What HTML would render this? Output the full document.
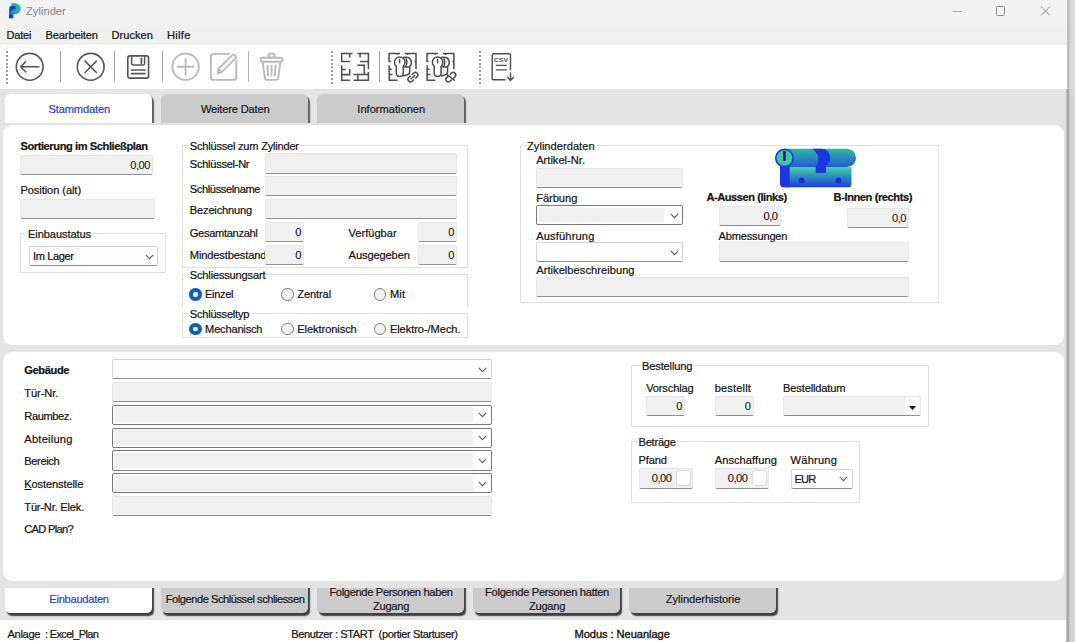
<!DOCTYPE html>
<html>
<head>
<meta charset="utf-8">
<title>Zylinder</title>
<style>
html,body{margin:0;padding:0;}
body{width:1075px;height:642px;overflow:hidden;position:relative;background:#e4e4e4;font-family:"Liberation Sans",sans-serif;font-size:11.1px;color:#141414;-webkit-text-stroke-width:0.22px;}
.a{position:absolute;white-space:nowrap;box-sizing:border-box;}
.t{position:absolute;white-space:nowrap;line-height:14px;height:14px;}
.b{font-weight:bold;letter-spacing:-0.36px;}
/* readonly text input */
.in{position:absolute;box-sizing:border-box;background:#f0f0f0;border:1px solid #e6e6e6;border-bottom:1px solid #909090;border-radius:2px;text-align:right;line-height:17px;padding-right:2px;letter-spacing:-0.45px;-webkit-text-stroke-width:0.1px;}
/* dark combo */
.cbd{position:absolute;box-sizing:border-box;background:#fff;border:1px solid #787878;border-radius:2px;}
.cbd i{position:absolute;left:1.6px;top:1.6px;bottom:1.6px;right:18px;background:#f0f0f0;}
/* light combo */
.cbl{position:absolute;box-sizing:border-box;background:#fdfdfd;border:1px solid #d2d2d2;border-bottom:1px solid #8e8e8e;border-radius:2px;line-height:17px;}
.chev{position:absolute;width:9px;height:6px;}
/* group box */
.gb{position:absolute;box-sizing:border-box;border:1px solid #dfdfdf;}
.gl{position:absolute;background:#fff;line-height:13px;height:13px;padding:0 1px;white-space:nowrap;}
/* radio */
.r0{position:absolute;box-sizing:border-box;width:12.4px;height:12.4px;border-radius:50%;border:1px solid #7e7e7e;background:#f1f1f1;}
.r1{position:absolute;box-sizing:border-box;width:12.4px;height:12.4px;border-radius:50%;border:4px solid #0a62b8;background:#fff;}
/* tabs */
.tab{position:absolute;box-sizing:border-box;text-align:center;color:#1a1a1a;}
.panel{position:absolute;background:#fff;border-radius:9px;}
.sep{position:absolute;width:1px;background:#a0a0a0;top:51px;height:31px;}
.grip{position:absolute;width:2px;top:50.5px;height:34px;background:repeating-linear-gradient(to bottom,#9c9c9c 0,#9c9c9c 2px,transparent 2px,transparent 3.85px);}
</style>
</head>
<body>
<!-- TITLE BAR -->
<div class="a" id="titlebar" style="left:0;top:0;width:1067px;height:24px;background:#f3f3f3;"></div>
<div class="a" id="menubar" style="left:0;top:23px;width:1067px;height:22px;background:linear-gradient(#f3f3f3,#f0f0f0 3px);"></div>
<div class="a" id="toolbar" style="left:0;top:44.8px;width:1067px;height:44.6px;background:#fff;"></div>
<div class="a" id="statusbar" style="left:0;top:620.4px;width:1067px;height:22px;background:#fff;"></div>
<!-- right window edge -->
<div class="a" style="left:1067px;top:0;width:8px;height:89px;background:linear-gradient(to right,#c4c4c4 0,#bcbcbc 1.5px,#d6d6d6 3px,#dedede 8px);"></div>
<div class="a" style="left:1065.5px;top:89px;width:9.5px;height:553px;background:linear-gradient(to right,#c6c6c6 0,#a8a8a8 1.5px,#b2b2b2 3px,#d2d2d2 4.2px,#dcdcdc 9.5px);"></div>

<!--TITLE-->
<svg class="a" style="left:8px;top:2px" width="14" height="17" viewBox="0 0 14 17">
<defs><linearGradient id="pg" x1="1" y1="0" x2="0" y2="1"><stop offset="0" stop-color="#2fc0a0"/><stop offset="0.55" stop-color="#22a0c0"/><stop offset="1" stop-color="#1a40e0"/></linearGradient></defs>
<path d="M3.2 1.2 H7.2 A5 5 0 0 1 7.2 12.2 H5.6 V16.2 H1 V9.5 L3.2 7.6 Z" fill="url(#pg)"/>
<path d="M1.6 4.2 H7.4 V7.6 H3.6 V9 L1 9.8 Z" fill="#1634e0"/>
<path d="M1 12.5 L3.6 12.5 L5 16.2 H1 Z" fill="#1438e8"/>
</svg>
<div class="t" style="left:26px;top:4px;font-size:11.1px;color:#838383;-webkit-text-stroke-width:0" ><span class="f" style="letter-spacing:0.041px;">Zylinder</span></div>
<svg class="a" style="left:940px;top:0" width="127" height="22" viewBox="0 0 127 22">
<path d="M12.5 11.5 H22" stroke="#b0b0b0" stroke-width="1" fill="none"/>
<rect x="56.5" y="6.5" width="8" height="9" rx="1" stroke="#8a8a8a" stroke-width="1" fill="none"/>
<path d="M101 6.5 L110 15.5 M110 6.5 L101 15.5" stroke="#8a8a8a" stroke-width="1" fill="none"/>
</svg>
<!--MENU-->
<div class="t" style="left:6.5px;top:28.2px"><span class="f" style="letter-spacing:-0.221px;">Datei</span></div>
<div class="t" style="left:45.6px;top:28.2px"><span class="f" style="letter-spacing:-0.157px;">Bearbeiten</span></div>
<div class="t" style="left:111.6px;top:28.2px"><span class="f" style="letter-spacing:-0.002px;">Drucken</span></div>
<div class="t" style="left:167px;top:28.2px"><span class="f" style="letter-spacing:0.299px;">Hilfe</span></div>
<!--TOOLBAR-->
<div class="grip" style="left:6px"></div>
<div class="grip" style="left:331px"></div>
<div class="grip" style="left:479px"></div>
<div class="sep" style="left:59.9px"></div>
<div class="sep" style="left:114.3px"></div>
<div class="sep" style="left:162px"></div>
<div class="sep" style="left:247.6px;background:#b4b4b4"></div>
<div class="sep" style="left:378.8px"></div>
<svg class="a" style="left:0;top:45px" width="540" height="44" viewBox="0 45 540 44" fill="none" stroke-linecap="round" stroke-linejoin="round">
<!-- back -->
<g stroke="#555" stroke-width="1.6">
<circle cx="29.7" cy="66.8" r="13.4"/>
<path d="M38.8 66.8 H20.6 M25.6 61.8 L20.6 66.8 L25.6 71.8"/>
<!-- cancel -->
<circle cx="90.7" cy="66.8" r="13.4"/>
<path d="M85 61.1 L96.4 72.5 M96.4 61.1 L85 72.5"/>
<!-- save -->
<rect x="127.8" y="55.9" width="20.8" height="22.2" rx="2.2" stroke-width="1.6"/>
<path d="M131.6 56 V63.6 Q131.6 65 133 65 H143.2 Q144.6 65 144.6 63.6 V56" stroke-width="1.5"/>
<path d="M141.4 58.4 V63" stroke-width="1.8"/>
<path d="M131.4 70 H145 M131.4 73.6 H145" stroke-width="1.6"/>
</g>
<!-- plus (disabled) -->
<g stroke="#b9b9b9" stroke-width="1.85">
<circle cx="185.6" cy="66.7" r="13.2"/>
<path d="M177.6 66.7 H193.6 M185.6 58.7 V74.7"/>
<!-- edit -->
<path d="M229.2 53.9 H213.6 Q210.9 53.9 210.9 56.6 V77.2 Q210.9 79.9 213.6 79.9 H233.6 Q236.3 79.9 236.3 77.2 V60.8"/>
<path d="M217.7 73.3 L218.2 69.2 L232 55.4 Q233.6 53.8 235.2 55.4 Q236.8 57 235.2 58.6 L221.4 72.4 Z M218.6 68.9 L221.8 72.1"/>
<!-- trash -->
<rect x="268.5" y="53.7" width="6" height="4" rx="1.3"/>
<rect x="260.6" y="57.7" width="21.8" height="4" rx="1.5"/>
<path d="M262.6 61.8 L265 78.6 Q265.2 79.9 266.5 79.9 H276.6 Q277.9 79.9 278.1 78.6 L280.5 61.8"/>
<path d="M267.4 65.6 L268.2 75.6 M271.5 65.6 V75.6 M275.6 65.6 L274.8 75.6"/>
</g>
<!-- floor plan -->
<g stroke="#505050" stroke-width="1.55" stroke-linecap="butt" stroke-linejoin="miter">
<path d="M352.6 53.5 H341.7 V61.4 H349.9 M349.7 53.5 V57.5"/>
<path d="M357.3 53.5 H368.4 V69.3 M360.1 53.5 V57.5 M360 61.4 H368.4"/>
<path d="M357.3 65.3 H364.3 V74.3 M353.5 74.4 H368.4 M368.4 72 V80.2 H353.5 M357.9 74.4 V80.2"/>
<path d="M341.7 65.2 V80.2 H349.9 M341.7 69.4 H345.8 M349.7 69 V74.6 H341.7"/>
</g>
<!-- plan + cylinder (x2) -->
<g stroke="#4c4c4c" stroke-width="1.5" stroke-linecap="butt">
<path d="M400 53.5 H389.1 V61.5 H390.8 M397.3 53.5 V54.8"/>
<path d="M404.8 53.5 H416 V69.3 M407.7 53.5 V55 M414.5 61.5 H416"/>
<path d="M389.2 65.2 V80.2 H397.6 M389.2 69.3 H391.7 M389.2 74.5 H392.6"/>
<!-- back cylinder -->
<path d="M402 57.6 Q404 57 406.6 57.3 A5.1 5.1 0 0 1 409.7 66.2 V71.8 Q409.7 74.8 406.7 75 L403 76"/>
<path d="M403.4 66.9 H409.6 M405.8 58.4 Q408 62 405.9 66.5"/>
<!-- front cylinder -->
<path d="M396.3 66.2 A5.3 5.3 0 1 1 403.2 66.2 V73 Q403.2 76.4 399.75 76.4 Q396.3 76.4 396.3 73 Z" fill="#fff"/>
<path d="M399.6 58.8 V63.4"/>
</g>
<g transform="translate(37.9 0)" stroke="#4c4c4c" stroke-width="1.5" stroke-linecap="butt">
<path d="M400 53.5 H389.1 V61.5 H390.8 M397.3 53.5 V54.8"/>
<path d="M404.8 53.5 H416 V69.3 M407.7 53.5 V55 M414.5 61.5 H416"/>
<path d="M389.2 65.2 V80.2 H397.6 M389.2 69.3 H391.7 M389.2 74.5 H392.6"/>
<!-- back cylinder -->
<path d="M402 57.6 Q404 57 406.6 57.3 A5.1 5.1 0 0 1 409.7 66.2 V71.8 Q409.7 74.8 406.7 75 L403 76"/>
<path d="M403.4 66.9 H409.6 M405.8 58.4 Q408 62 405.9 66.5"/>
<!-- front cylinder -->
<path d="M396.3 66.2 A5.3 5.3 0 1 1 403.2 66.2 V73 Q403.2 76.4 399.75 76.4 Q396.3 76.4 396.3 73 Z" fill="#fff"/>
<path d="M399.6 58.8 V63.4"/>
</g>
<!-- link -->
<g stroke="#4c4c4c" stroke-width="1.45" transform="translate(412.9 77.2) rotate(-42)">
<path d="M-1.2 -2.5 H-3.3 A2.5 2.5 0 0 0 -3.3 2.5 H-1.2 M1.2 -2.5 H3.3 A2.5 2.5 0 0 1 3.3 2.5 H1.2 M-2.4 0 H2.4"/>
</g>
<!-- broken link -->
<g stroke="#4c4c4c" stroke-width="1.45" transform="translate(450.8 77.2) rotate(-42)">
<path d="M-1.6 -2.5 H-3.3 A2.5 2.5 0 0 0 -3.3 2.5 H-1.6 M1.6 -2.5 H3.3 A2.5 2.5 0 0 1 3.3 2.5 H1.6"/>
</g>
<path d="M447.4 74.8 L454.2 80.2" stroke="#4c4c4c" stroke-width="1.5"/>
<!-- csv -->
<g stroke="#505050" stroke-width="1.45" stroke-linecap="butt">
<path d="M510.5 70.2 V54.9 Q510.5 53.8 509.4 53.8 H493.3 Q492.2 53.8 492.2 54.9 V78.7 Q492.2 79.8 493.3 79.8 H505.5"/>
<path d="M495.8 65.3 H506.9 M495.8 69.8 H506.9" stroke-width="1.3"/>
<path d="M510.5 73 V80.4 M507.5 77.3 L510.5 80.5 L513.5 77.3" stroke-linecap="round"/>
</g>
<text x="494" y="62.2" font-family="Liberation Sans" font-weight="bold" font-size="5.4" fill="#505050" stroke="none" textLength="14" lengthAdjust="spacingAndGlyphs">CSV</text>
</svg>
<!--TABS-->
<div class="a" style="left:5px;top:90px;width:152px;height:33px;overflow:hidden"><div class="tab" style="left:0;top:3.5px;width:146.5px;height:40px;background:#fff;border-radius:6px 6px 0 0;box-shadow:2px 2.5px 1.2px #5c5c5c;color:#2d3fd0;line-height:30.6px;padding-left:2px"><span class="f" style="letter-spacing:-0.121px;">Stammdaten</span></div></div>
<div class="a" style="left:161px;top:90px;width:152px;height:33px;overflow:hidden"><div class="tab" style="left:0;top:3.5px;width:146.5px;height:40px;background:#cbcbcb;border-radius:6px 6px 0 0;box-shadow:2px 2.5px 1.2px #5c5c5c;color:#1a1a1a;line-height:30.6px;padding-left:2px"><span class="f" style="letter-spacing:-0.163px;">Weitere Daten</span></div></div>
<div class="a" style="left:317px;top:90px;width:152px;height:33px;overflow:hidden"><div class="tab" style="left:0;top:3.5px;width:146.5px;height:40px;background:#cbcbcb;border-radius:6px 6px 0 0;box-shadow:2px 2.5px 1.2px #5c5c5c;color:#1a1a1a;line-height:30.6px;padding-left:2px"><span class="f" style="letter-spacing:-0.003px;">Informationen</span></div></div>
<!--PANEL1-->
<div class="panel" style="left:3px;top:125px;width:1061px;height:220px"></div>
<div class="t b" style="left:20.4px;top:138.7px;"><span class="f" style="letter-spacing:-0.411px;">Sortierung im Schließplan</span></div>
<div class="in" style="left:20px;top:155px;width:133px;height:20px;line-height:18.5px">0,00</div>
<div class="t" style="left:20.4px;top:182.7px;"><span class="f" style="letter-spacing:-0.075px;">Position (alt)</span></div>
<div class="in" style="left:20px;top:199px;width:135px;height:20px;line-height:18.5px"></div>
<div class="gb" style="left:20px;top:233px;width:146px;height:40.2px;"></div><div class="gl" style="left:27px;top:227.5px"><span class="f" style="letter-spacing:-0.096px;">Einbaustatus</span></div>
<div class="cbl" style="left:29px;top:246px;width:129px;height:20px;line-height:18px;padding-left:3px"><span class="f" style="letter-spacing:-0.398px;">Im Lager</span><svg class="chev" style="right:3.3px;top:6.5px" viewBox="0 0 9 6"><path d="M0.8 0.9 L4.5 4.6 L8.2 0.9" fill="none" stroke="#5e5e5e" stroke-width="1.15"/></svg></div>
<div class="gb" style="left:182px;top:144.6px;width:286px;height:123.8px;"></div><div class="gl" style="left:188.8px;top:140.0px"><span class="f" style="letter-spacing:-0.230px;">Schlüssel zum Zylinder</span></div>
<div class="t" style="left:189.8px;top:157.0px;"><span class="f" style="letter-spacing:-0.283px;">Schlüssel-Nr</span></div>
<div class="in" style="left:265px;top:153.1px;width:192px;height:20.6px;line-height:19.1px"></div>
<div class="t" style="left:189.8px;top:181.8px;"><span class="f" style="letter-spacing:-0.380px;">Schlüsselname</span></div>
<div class="in" style="left:265px;top:175.6px;width:192px;height:20.6px;line-height:19.1px"></div>
<div class="t" style="left:189.8px;top:202.8px;"><span class="f" style="letter-spacing:-0.178px;">Bezeichnung</span></div>
<div class="in" style="left:265px;top:198.7px;width:192px;height:20.3px;line-height:18.8px"></div>
<div class="t" style="left:189.8px;top:226.0px;"><span class="f" style="letter-spacing:-0.319px;">Gesamtanzahl</span></div>
<div class="in" style="left:265px;top:222.3px;width:39px;height:19.7px;line-height:18.2px">0</div>
<div class="t" style="left:348.6px;top:226.0px;"><span class="f" style="letter-spacing:-0.012px;">Verfügbar</span></div>
<div class="in" style="left:418px;top:222.3px;width:39px;height:19.7px;line-height:18.2px">0</div>
<div class="a" style="left:189.8px;top:247.8px;width:75.2px;height:14px;overflow:hidden"><div class="t" style="left:0;top:0"><span class="f" style="letter-spacing:-0.131px;">Mindestbestand</span></div></div>
<div class="in" style="left:265px;top:245.3px;width:39px;height:19.7px;line-height:18.2px">0</div>
<div class="t" style="left:348.6px;top:247.8px;"><span class="f" style="letter-spacing:-0.111px;">Ausgegeben</span></div>
<div class="in" style="left:418px;top:245.3px;width:39px;height:19.7px;line-height:18.2px">0</div>
<div class="gb" style="left:182px;top:274px;width:286px;height:34px;border-bottom:none;"></div><div class="gl" style="left:188.8px;top:268.5px"><span class="f" style="letter-spacing:-0.188px;">Schliessungsart</span></div>
<div class="r1" style="left:189.3px;top:288.2px"></div>
<div class="t" style="left:205.1px;top:287.1px;"><span class="f" style="letter-spacing:-0.370px;">Einzel</span></div>
<div class="r0" style="left:281.40000000000003px;top:288.2px"></div>
<div class="t" style="left:297.3px;top:287.1px;"><span class="f" style="letter-spacing:-0.119px;">Zentral</span></div>
<div class="r0" style="left:373.8px;top:288.2px"></div>
<div class="t" style="left:389.9px;top:287.1px;"><span class="f" style="letter-spacing:0.168px;">Mit</span></div>
<div class="gb" style="left:182px;top:313.3px;width:286px;height:25px;"></div><div class="gl" style="left:188.8px;top:307.8px"><span class="f" style="letter-spacing:-0.248px;">Schlüsseltyp</span></div>
<div class="r1" style="left:189.3px;top:322.5px"></div>
<div class="t" style="left:205.1px;top:321.8px;"><span class="f" style="letter-spacing:-0.200px;">Mechanisch</span></div>
<div class="r0" style="left:281.40000000000003px;top:322.5px"></div>
<div class="t" style="left:297.3px;top:321.8px;"><span class="f" style="letter-spacing:-0.086px;">Elektronisch</span></div>
<div class="r0" style="left:373.8px;top:322.5px"></div>
<div class="t" style="left:389.9px;top:321.8px;"><span class="f" style="letter-spacing:-0.065px;">Elektro-/Mech.</span></div>
<div class="gb" style="left:520px;top:144.7px;width:419px;height:158.3px;"></div><div class="gl" style="left:526px;top:140.0px"><span class="f" style="letter-spacing:0.029px;">Zylinderdaten</span></div>
<div class="t" style="left:536.2px;top:152.9px;"><span class="f" style="letter-spacing:0.009px;">Artikel-Nr.</span></div>
<div class="in" style="left:536px;top:168px;width:147px;height:20px;line-height:18.5px"></div>
<div class="t" style="left:536.2px;top:191.2px;"><span class="f" style="letter-spacing:-0.033px;">Färbung</span></div>
<div class="cbd" style="left:536px;top:205px;width:147px;height:20px"><i></i><svg class="chev" style="right:3.3px;top:6.5px" viewBox="0 0 9 6"><path d="M0.8 0.9 L4.5 4.6 L8.2 0.9" fill="none" stroke="#5e5e5e" stroke-width="1.15"/></svg></div>
<div class="t" style="left:536.2px;top:228.6px;"><span class="f" style="letter-spacing:0.155px;">Ausführung</span></div>
<div class="cbl" style="left:536px;top:242px;width:147px;height:20px;line-height:18px;padding-left:3px"><svg class="chev" style="right:3.3px;top:6.5px" viewBox="0 0 9 6"><path d="M0.8 0.9 L4.5 4.6 L8.2 0.9" fill="none" stroke="#5e5e5e" stroke-width="1.15"/></svg></div>
<div class="t" style="left:536.2px;top:262.7px;"><span class="f" style="letter-spacing:0.051px;">Artikelbeschreibung</span></div>
<div class="in" style="left:536px;top:277px;width:373px;height:20px;line-height:18.5px"></div>
<div class="t b" style="left:706.4px;top:190.4px;"><span class="f" style="letter-spacing:-0.446px;">A-Aussen (links)</span></div>
<div class="t b" style="left:833.6px;top:190.4px;"><span class="f" style="letter-spacing:-0.416px;">B-Innen (rechts)</span></div>
<div class="in" style="left:718.5px;top:206px;width:62px;height:20px;line-height:18.5px">0,0</div>
<div class="in" style="left:847px;top:208px;width:62px;height:20px;line-height:18.5px">0,0</div>
<div class="t" style="left:718.6px;top:228.5px;"><span class="f" style="letter-spacing:-0.203px;">Abmessungen</span></div>
<div class="in" style="left:718.5px;top:242px;width:190.5px;height:20px;line-height:18.5px"></div>
<!--CYL-->
<svg class="a" style="left:770px;top:145px" width="92" height="46" viewBox="770 145 92 46">
<defs>
<linearGradient id="c1" x1="0" y1="0" x2="0" y2="1"><stop offset="0" stop-color="#2fb8a0"/><stop offset="1" stop-color="#2858d8"/></linearGradient>
<linearGradient id="c2" x1="0" y1="0" x2="0" y2="1"><stop offset="0" stop-color="#42d4a0"/><stop offset="0.45" stop-color="#2e90c0"/><stop offset="1" stop-color="#1c3cdc"/></linearGradient>
</defs>
<path d="M784 148.8 H847 A9.1 9.1 0 0 1 847 167 H784 Z" fill="url(#c1)"/>
<path d="M780 167 H851.5 V184 Q851.5 187.3 848.3 187.3 H784 Q780 187.3 780 183.3 Z" fill="url(#c2)"/>
<path d="M780 163 H789.7 V187.3 H784 Q780 187.3 780 183.3 Z" fill="#1838e0"/>
<path d="M812.5 148.8 H821 A9.1 9.1 0 0 1 826 165.6 V173 H815.7 V167 Q822.5 158 812.5 148.8 Z" fill="#1a38e0"/>
<circle cx="784.5" cy="158" r="8.7" fill="#3cc8a0" stroke="#1a3ce0" stroke-width="1.7"/>
<path d="M784.2 151.2 V161 M784.2 153 H785.8 M784.2 156 H785.8 M784.2 159 H785.8" stroke="#0c1a78" stroke-width="2.4"/>
<circle cx="801.7" cy="180.5" r="3" fill="#1530cc"/>
<circle cx="838.5" cy="180.5" r="3" fill="#1530cc"/>
</svg>
<!--PANEL2-->
<div class="panel" style="left:3px;top:352px;width:1061px;height:229px"></div>
<div class="t b" style="left:24.3px;top:363.0px;"><span class="f" style="letter-spacing:-0.381px;">Gebäude</span></div>
<div class="t" style="left:24.3px;top:386.0px;"><span class="f" style="letter-spacing:-0.088px;">Tür-Nr.</span></div>
<div class="t" style="left:24.3px;top:408.8px;"><span class="f" style="letter-spacing:-0.408px;">Raumbez.</span></div>
<div class="t" style="left:24.3px;top:431.5px;"><span class="f" style="letter-spacing:0.226px;">Abteilung</span></div>
<div class="t" style="left:24.3px;top:454.3px;"><span class="f" style="letter-spacing:-0.389px;">Bereich</span></div>
<div class="t" style="left:24.3px;top:477.0px;"><span class="f" style="letter-spacing:-0.129px;"><u>K</u>ostenstelle</span></div>
<div class="t" style="left:24.3px;top:500.0px;"><span class="f" style="letter-spacing:-0.190px;">Tür-Nr. Elek.</span></div>
<div class="t" style="left:24.3px;top:522.1px;"><span class="f" style="letter-spacing:-0.699px;">CAD Plan?</span></div>
<div class="cbl" style="left:111.5px;top:359px;width:380px;height:20px;line-height:18px;padding-left:3px"><svg class="chev" style="right:3.3px;top:6.5px" viewBox="0 0 9 6"><path d="M0.8 0.9 L4.5 4.6 L8.2 0.9" fill="none" stroke="#5e5e5e" stroke-width="1.15"/></svg></div>
<div class="in" style="left:111.5px;top:382.3px;width:380px;height:19.5px;line-height:18.0px"></div>
<div class="cbd" style="left:111.5px;top:404.7px;width:380px;height:20.4px"><i></i><svg class="chev" style="right:3.3px;top:6.699999999999999px" viewBox="0 0 9 6"><path d="M0.8 0.9 L4.5 4.6 L8.2 0.9" fill="none" stroke="#5e5e5e" stroke-width="1.15"/></svg></div>
<div class="cbd" style="left:111.5px;top:427.5px;width:380px;height:20.4px"><i></i><svg class="chev" style="right:3.3px;top:6.699999999999999px" viewBox="0 0 9 6"><path d="M0.8 0.9 L4.5 4.6 L8.2 0.9" fill="none" stroke="#5e5e5e" stroke-width="1.15"/></svg></div>
<div class="cbd" style="left:111.5px;top:450.3px;width:380px;height:20.4px"><i></i><svg class="chev" style="right:3.3px;top:6.699999999999999px" viewBox="0 0 9 6"><path d="M0.8 0.9 L4.5 4.6 L8.2 0.9" fill="none" stroke="#5e5e5e" stroke-width="1.15"/></svg></div>
<div class="cbd" style="left:111.5px;top:473.1px;width:380px;height:20.4px"><i></i><svg class="chev" style="right:3.3px;top:6.699999999999999px" viewBox="0 0 9 6"><path d="M0.8 0.9 L4.5 4.6 L8.2 0.9" fill="none" stroke="#5e5e5e" stroke-width="1.15"/></svg></div>
<div class="in" style="left:111.5px;top:496.2px;width:380px;height:19.8px;line-height:18.3px"></div>
<div class="gb" style="left:631px;top:364.7px;width:298px;height:62.8px;"></div><div class="gl" style="left:641px;top:360.0px"><span class="f" style="letter-spacing:-0.151px;">Bestellung</span></div>
<div class="t" style="left:646.2px;top:381.0px;"><span class="f" style="letter-spacing:-0.159px;">Vorschlag</span></div>
<div class="t" style="left:714.7px;top:381.0px;"><span class="f" style="letter-spacing:0.143px;">bestellt</span></div>
<div class="t" style="left:783.1px;top:381.0px;"><span class="f" style="letter-spacing:-0.153px;">Bestelldatum</span></div>
<div class="in" style="left:646px;top:395.8px;width:39px;height:20.5px;line-height:19.0px">0</div>
<div class="in" style="left:714.5px;top:395.8px;width:39px;height:20.5px;line-height:19.0px">0</div>
<div class="in" style="left:783px;top:395.8px;width:138px;height:20.5px;line-height:19.0px"></div>
<div class="a" style="left:905px;top:397.3px;width:15px;height:17.5px;background:#fbfbfb;border-radius:3px"></div><svg class="a" style="left:908.5px;top:405.5px" width="7" height="4" viewBox="0 0 7 4"><path d="M0 0 H7 L3.5 4 Z" fill="#111"/></svg>
<div class="gb" style="left:631px;top:440.6px;width:229px;height:62.9px;"></div><div class="gl" style="left:637.5px;top:436.0px"><span class="f" style="letter-spacing:-0.237px;">Beträge</span></div>
<div class="t" style="left:638.5px;top:453.1px;"><span class="f" style="letter-spacing:-0.160px;">Pfand</span></div>
<div class="t" style="left:714.7px;top:453.1px;"><span class="f" style="letter-spacing:0.065px;">Anschaffung</span></div>
<div class="t" style="left:790.6px;top:453.1px;"><span class="f" style="letter-spacing:0.198px;">Währung</span></div>
<div class="in" style="left:638.5px;top:468.3px;width:54px;height:20.6px;line-height:19px;padding-right:20px">0,00</div>
<div class="a" style="left:675.5px;top:470.4px;width:15.5px;height:15.6px;background:#fdfdfd;border:1px solid #d8d8d8;border-radius:3.5px"></div>
<div class="in" style="left:714.5px;top:468.3px;width:54px;height:20.6px;line-height:19px;padding-right:20px">0,00</div>
<div class="a" style="left:751.5px;top:470.4px;width:15.5px;height:15.6px;background:#fdfdfd;border:1px solid #d8d8d8;border-radius:3.5px"></div>
<div class="cbl" style="left:790.5px;top:468.8px;width:62px;height:20px;line-height:18px;padding-left:3px"><span class="f" style="letter-spacing:-0.879px;">EUR</span><svg class="chev" style="right:3.3px;top:6.5px" viewBox="0 0 9 6"><path d="M0.8 0.9 L4.5 4.6 L8.2 0.9" fill="none" stroke="#5e5e5e" stroke-width="1.15"/></svg></div>
<!--BTABS-->
<div class="a" style="left:5.3px;top:587.8px;width:152px;height:31px;overflow:hidden"><div class="tab" style="left:0;top:-10px;width:146.5px;height:35.2px;background:#fff;border-radius:0 0 5px 5px;box-shadow:2px 3px 1.3px #404040;color:#2d3fd0;"><div style="position:absolute;left:1px;right:0;top:14.5px;line-height:14px"><span class="f" style="letter-spacing:-0.256px;">Einbaudaten</span></div></div></div>
<div class="a" style="left:161.3px;top:587.8px;width:152px;height:31px;overflow:hidden"><div class="tab" style="left:0;top:-10px;width:146.5px;height:35.2px;background:#cbcbcb;border-radius:0 0 5px 5px;box-shadow:2px 3px 1.3px #404040;color:#1a1a1a;"><div style="position:absolute;left:1px;right:0;top:14.5px;line-height:14px"><span class="f" style="letter-spacing:-0.448px;">Folgende Schlüssel schliessen</span></div></div></div>
<div class="a" style="left:317.3px;top:587.8px;width:152px;height:31px;overflow:hidden"><div class="tab" style="left:0;top:-10px;width:146.5px;height:35.2px;background:#cbcbcb;border-radius:0 0 5px 5px;box-shadow:2px 3px 1.3px #404040;color:#1a1a1a;"><div style="position:absolute;left:1px;right:0;top:7.7px;line-height:14px"><span class="f" style="letter-spacing:-0.325px;">Folgende Personen haben</span><br><span class="f" style="letter-spacing:-0.257px;">Zugang</span></div></div></div>
<div class="a" style="left:473.3px;top:587.8px;width:152px;height:31px;overflow:hidden"><div class="tab" style="left:0;top:-10px;width:146.5px;height:35.2px;background:#cbcbcb;border-radius:0 0 5px 5px;box-shadow:2px 3px 1.3px #404040;color:#1a1a1a;"><div style="position:absolute;left:1px;right:0;top:7.7px;line-height:14px"><span class="f" style="letter-spacing:-0.286px;">Folgende Personen hatten</span><br><span class="f" style="letter-spacing:-0.257px;">Zugang</span></div></div></div>
<div class="a" style="left:629.3px;top:587.8px;width:152px;height:31px;overflow:hidden"><div class="tab" style="left:0;top:-10px;width:146.5px;height:35.2px;background:#cbcbcb;border-radius:0 0 5px 5px;box-shadow:2px 3px 1.3px #404040;color:#1a1a1a;"><div style="position:absolute;left:1px;right:0;top:14.5px;line-height:14px"><span class="f" style="letter-spacing:-0.051px;">Zylinderhistorie</span></div></div></div>
<!--STATUS-->
<div class="t" style="left:7.4px;top:627.2px;white-space:pre;"><span class="f" style="letter-spacing:-0.291px;">Anlage</span></div>
<div class="t" style="left:45px;top:627.2px;white-space:pre;"><span class="f" style="letter-spacing:-0.706px;">: Excel_Plan</span></div>
<div class="t" style="left:291.3px;top:627.2px;white-space:pre;"><span class="f" style="letter-spacing:-0.424px;">Benutzer : START  (portier Startuser)</span></div>
<div class="t" style="left:574.5px;top:627.2px;white-space:pre;-webkit-text-stroke-width:0.36px;"><span class="f" style="letter-spacing:-0.054px;">Modus : Neuanlage</span></div>
</body>
</html>
